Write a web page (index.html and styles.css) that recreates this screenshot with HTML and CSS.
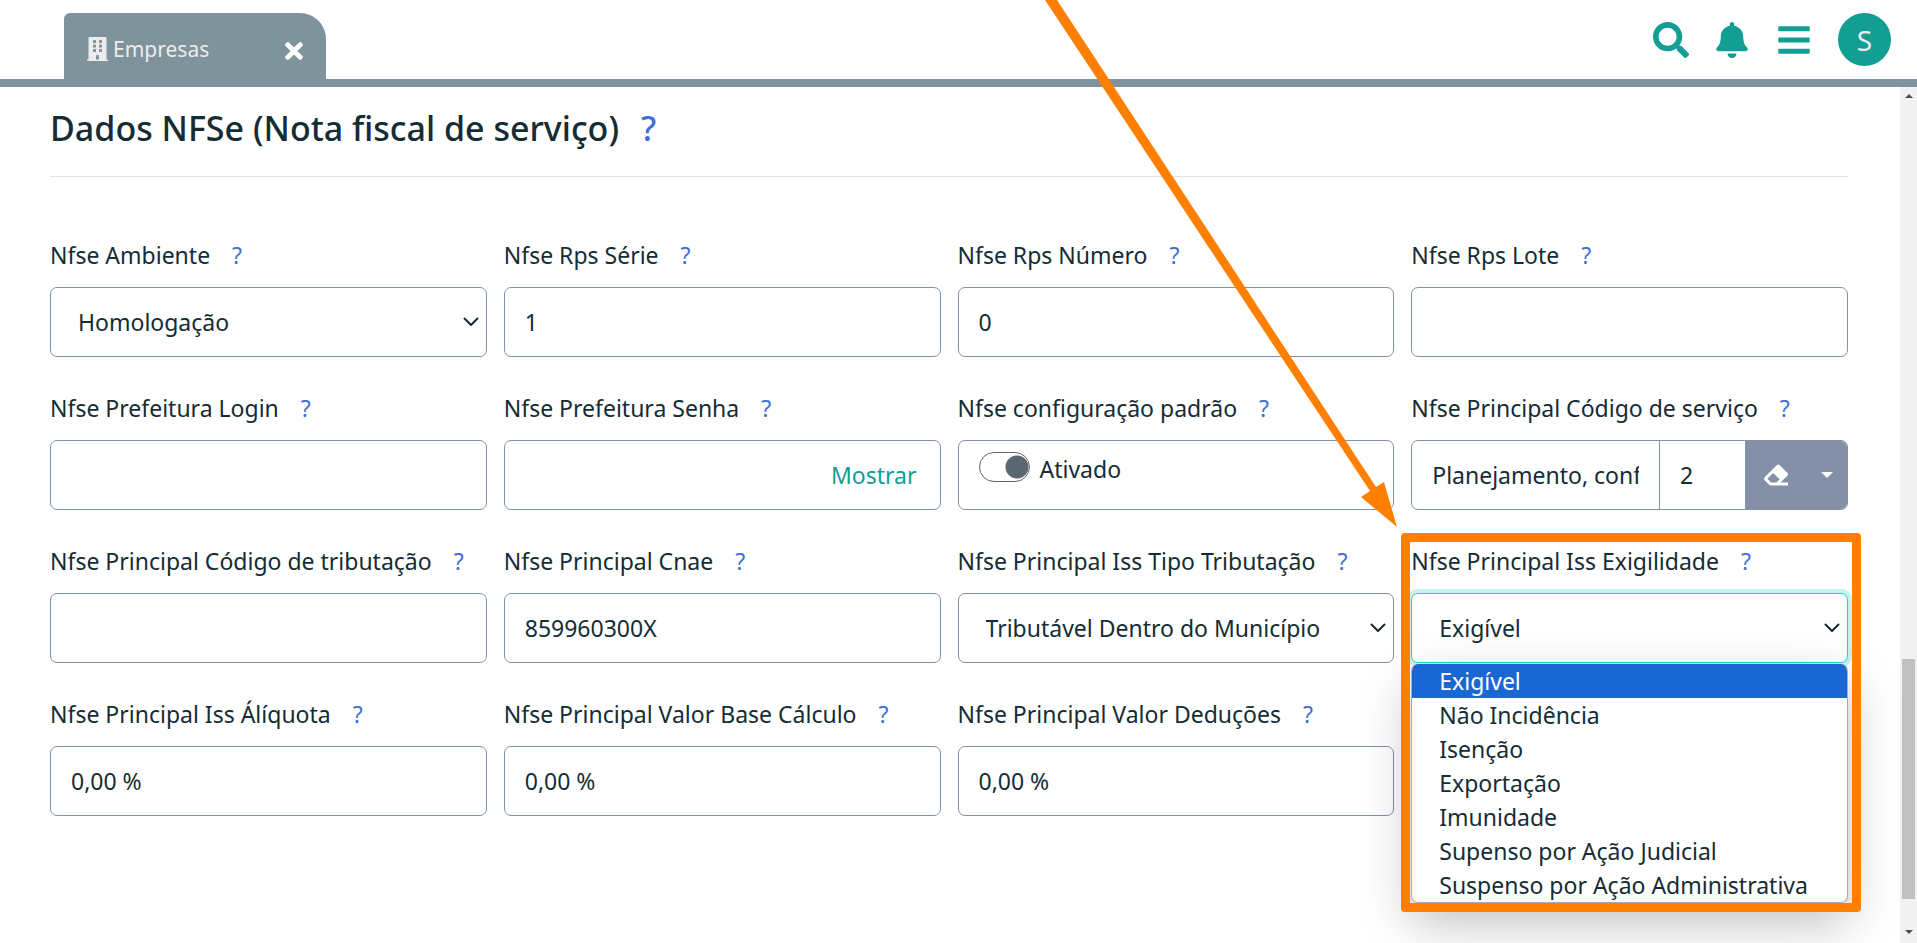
FILE: index.html
```html
<!DOCTYPE html>
<html lang="pt-BR">
<head>
<meta charset="utf-8">
<title>Empresas</title>
<link rel="stylesheet" href="styles.css">
</head>
<body>
<header class="topbar">
  <div class="tab">
    <svg class="tab-icon" viewBox="0 0 448 512" aria-hidden="true"><path d="M436 480h-20V24c0-13.300-10.700-24-24-24H56C42.700 0 32 10.700 32 24v456H12c-6.600 0-12 5.400-12 12v20h448v-20c0-6.600-5.400-12-12-12zM128 76c0-6.600 5.400-12 12-12h40c6.600 0 12 5.400 12 12v40c0 6.600-5.400 12-12 12h-40c-6.600 0-12-5.400-12-12V76zm0 96c0-6.600 5.400-12 12-12h40c6.600 0 12 5.400 12 12v40c0 6.600-5.400 12-12 12h-40c-6.600 0-12-5.400-12-12v-40zm52 148h-40c-6.600 0-12-5.400-12-12v-40c0-6.600 5.400-12 12-12h40c6.600 0 12 5.400 12 12v40c0 6.600-5.400 12-12 12zm76 160h-64v-84c0-6.600 5.400-12 12-12h40c6.600 0 12 5.400 12 12v84zm64-172c0 6.600-5.400 12-12 12h-40c-6.600 0-12-5.400-12-12v-40c0-6.600 5.400-12 12-12h40c6.600 0 12 5.400 12 12v40zm0-96c0 6.600-5.400 12-12 12h-40c-6.600 0-12-5.400-12-12v-40c0-6.600 5.400-12 12-12h40c6.600 0 12 5.400 12 12v40zm0-96c0 6.600-5.400 12-12 12h-40c-6.600 0-12-5.400-12-12V76c0-6.600 5.400-12 12-12h40c6.600 0 12 5.400 12 12v40z"/></svg>
    <span class="tab-title">Empresas</span>
    <button class="tab-close" type="button" aria-label="Fechar aba"><svg viewBox="0 0 352 512" aria-hidden="true"><path d="M242.720 256l100.070-100.070c12.280-12.280 12.280-32.190 0-44.480l-22.240-22.240c-12.280-12.280-32.190-12.280-44.480 0L176 189.280 75.930 89.210c-12.280-12.280-32.190-12.280-44.480 0L9.210 111.450c-12.280 12.280-12.280 32.190 0 44.480L109.280 256 9.210 356.070c-12.280 12.280-12.280 32.190 0 44.480l22.240 22.240c12.280 12.280 32.200 12.280 44.480 0L176 322.720l100.070 100.070c12.280 12.280 32.200 12.280 44.480 0l22.240-22.240c12.280-12.280 12.280-32.190 0-44.480L242.720 256z"/></svg></button>
  </div>
  <nav class="actions">
    <button type="button" aria-label="Buscar"><svg class="ico-search" viewBox="0 0 512 512" aria-hidden="true"><path d="M505 442.700L405.300 343c-4.500-4.500-10.600-7-17-7H372c27.600-35.300 44-79.700 44-128C416 93.100 322.900 0 208 0S0 93.100 0 208s93.100 208 208 208c48.300 0 92.700-16.400 128-44v16.300c0 6.400 2.500 12.500 7 17l99.700 99.700c9.400 9.400 24.600 9.400 33.900 0l28.300-28.300c9.400-9.400 9.400-24.600.1-34zM208 336c-70.700 0-128-57.200-128-128 0-70.700 57.200-128 128-128 70.700 0 128 57.200 128 128 0 70.700-57.200 128-128 128z"/></svg></button>
    <button type="button" aria-label="Notificações"><svg class="ico-bell" viewBox="0 0 448 512" aria-hidden="true"><path d="M224 512c35.320 0 63.970-28.650 63.970-64H160.030c0 35.350 28.650 64 63.970 64zm215.390-149.710c-19.320-20.760-55.470-51.990-55.470-154.290 0-77.700-54.480-139.900-127.940-155.160V32c0-17.670-14.320-32-31.980-32s-31.980 14.330-31.980 32v20.840C118.560 68.100 64.080 130.300 64.080 208c0 102.300-36.150 133.530-55.470 154.290-6 6.450-8.660 14.160-8.610 21.710.11 16.400 12.980 32 32.100 32h383.800c19.120 0 32-15.600 32.100-32 .05-7.550-2.610-15.270-8.610-21.710z"/></svg></button>
    <button type="button" aria-label="Menu"><svg class="ico-menu" viewBox="0 0 448 512" aria-hidden="true"><path d="M16 132h416c8.837 0 16-7.163 16-16V76c0-8.837-7.163-16-16-16H16C7.163 60 0 67.163 0 76v40c0 8.837 7.163 16 16 16zm0 160h416c8.837 0 16-7.163 16-16v-40c0-8.837-7.163-16-16-16H16c-8.837 0-16 7.163-16 16v40c0 8.837 7.163 16 16 16zm0 160h416c8.837 0 16-7.163 16-16v-40c0-8.837-7.163-16-16-16H16c-8.837 0-16 7.163-16 16v40c0 8.837 7.163 16 16 16z"/></svg></button>
    <button class="avatar" type="button" aria-label="Conta">S</button>
  </nav>
</header>
<div class="body">
  <main class="content">
    <h1 class="title">Dados NFSe (Nota fiscal de serviço)<a class="help" href="#">?</a></h1>
    <form class="grid">
      <div class="field">
        <div class="caption"><label for="amb">Nfse Ambiente</label><a class="help" href="#">?</a></div>
        <div class="select"><select class="control" id="amb"><option>Homologação</option></select><svg class="chevron" viewBox="0 0 16 10" aria-hidden="true"><path d="M1.500 1.500 8 8l6.500-6.500"/></svg></div>
      </div>
      <div class="field">
        <div class="caption"><label for="serie">Nfse Rps Série</label><a class="help" href="#">?</a></div>
        <input class="control" id="serie" type="text" value="1">
      </div>
      <div class="field">
        <div class="caption"><label for="num">Nfse Rps Número</label><a class="help" href="#">?</a></div>
        <input class="control" id="num" type="text" value="0">
      </div>
      <div class="field">
        <div class="caption"><label for="lote">Nfse Rps Lote</label><a class="help" href="#">?</a></div>
        <input class="control" id="lote" type="text">
      </div>
      <div class="field">
        <div class="caption"><label for="login">Nfse Prefeitura Login</label><a class="help" href="#">?</a></div>
        <input class="control" id="login" type="text">
      </div>
      <div class="field">
        <div class="caption"><label for="senha">Nfse Prefeitura Senha</label><a class="help" href="#">?</a></div>
        <div class="control group"><input class="bare" id="senha" type="password"><button class="reveal" type="button">Mostrar</button></div>
      </div>
      <div class="field">
        <div class="caption"><label for="padrao">Nfse configuração padrão</label><a class="help" href="#">?</a></div>
        <div class="control switch-box"><input class="switch" id="padrao" type="checkbox" role="switch" checked><label for="padrao">Ativado</label></div>
      </div>
      <div class="field">
        <div class="caption"><label for="servico">Nfse Principal Código de serviço</label><a class="help" href="#">?</a></div>
        <div class="control group">
          <input class="bare service" id="servico" type="text" value="Planejamento, confecção">
          <input class="bare code" type="text" value="2" aria-label="Código">
          <div class="tools">
            <button type="button" aria-label="Limpar"><svg class="ico-eraser" viewBox="0 0 512 512" aria-hidden="true"><path d="M497.941 273.941c18.745-18.745 18.745-49.137 0-67.882l-160-160c-18.745-18.745-49.136-18.746-67.883 0l-256 256c-18.745 18.745-18.745 49.137 0 67.882l96 96A48.004 48.004 0 0 0 144 480h356c6.627 0 12-5.373 12-12v-40c0-6.627-5.373-12-12-12H355.883l142.058-142.059zm-302.627-62.627l137.373 137.373L265.373 416H150.628l-80-80 124.686-124.686z"/></svg></button>
            <button type="button" aria-label="Opções"><svg class="ico-caret" viewBox="0 0 12 6" aria-hidden="true"><path d="M0 0h12L6 6z"/></svg></button>
          </div>
        </div>
      </div>
      <div class="field">
        <div class="caption"><label for="trib">Nfse Principal Código de tributação</label><a class="help" href="#">?</a></div>
        <input class="control" id="trib" type="text">
      </div>
      <div class="field">
        <div class="caption"><label for="cnae">Nfse Principal Cnae</label><a class="help" href="#">?</a></div>
        <input class="control" id="cnae" type="text" value="859960300X">
      </div>
      <div class="field">
        <div class="caption"><label for="tipo">Nfse Principal Iss Tipo Tributação</label><a class="help" href="#">?</a></div>
        <div class="select"><select class="control" id="tipo"><option>Tributável Dentro do Município</option></select><svg class="chevron" viewBox="0 0 16 10" aria-hidden="true"><path d="M1.500 1.500 8 8l6.500-6.500"/></svg></div>
      </div>
      <div class="field">
        <div class="caption"><label for="exig">Nfse Principal Iss Exigilidade</label><a class="help" href="#">?</a></div>
        <div class="select"><select class="control focused" id="exig"><option>Exigível</option></select><svg class="chevron" viewBox="0 0 16 10" aria-hidden="true"><path d="M1.500 1.500 8 8l6.500-6.500"/></svg></div>
        <ul class="options" role="listbox" aria-label="Nfse Principal Iss Exigilidade">
          <li role="option" aria-selected="true">Exigível</li>
          <li role="option">Não Incidência</li>
          <li role="option">Isenção</li>
          <li role="option">Exportação</li>
          <li role="option">Imunidade</li>
          <li role="option">Supenso por Ação Judicial</li>
          <li role="option">Suspenso por Ação Administrativa</li>
        </ul>
        <div class="highlight"></div>
      </div>
      <div class="field">
        <div class="caption"><label for="aliq">Nfse Principal Iss Álíquota</label><a class="help" href="#">?</a></div>
        <input class="control" id="aliq" type="text" value="0,00 %">
      </div>
      <div class="field">
        <div class="caption"><label for="base">Nfse Principal Valor Base Cálculo</label><a class="help" href="#">?</a></div>
        <input class="control" id="base" type="text" value="0,00 %">
      </div>
      <div class="field">
        <div class="caption"><label for="ded">Nfse Principal Valor Deduções</label><a class="help" href="#">?</a></div>
        <input class="control" id="ded" type="text" value="0,00 %">
      </div>
    </form>
  </main>
  <div class="scrollbar" aria-hidden="true">
    <svg class="sb-arrow" viewBox="0 0 8 4"><path d="M0 4h8L4 0z"/></svg>
    <div class="sb-track"><div class="sb-thumb"></div></div>
    <svg class="sb-arrow" viewBox="0 0 8 4"><path d="M0 0h8L4 4z"/></svg>
  </div>
</div>
<svg class="pointer" viewBox="0 0 352 527" aria-hidden="true"><path d="M0 0H12L331 487 339 482 352 527 316 497 325 491z"/></svg>
</body>
</html>
```
FILE: styles.css
```css
* { box-sizing: border-box; }
body {
  margin: 0;
  min-height: 100vh;
  display: flex;
  flex-direction: column;
  position: relative;
  overflow: hidden;
  background: #fff;
  color: #152c35;
  font-family: "Noto Sans", "Open Sans", sans-serif;
  font-size: 23px;
}
button, input, select { font: inherit; color: inherit; }
button { background: none; border: 0; padding: 0; cursor: pointer; }
a { text-decoration: none; }

.topbar {
  height: 87px;
  border-bottom: 8px solid #7f939d;
  padding: 13px 26px 0 64px;
  display: flex;
  justify-content: space-between;
}
.tab {
  width: 262px;
  padding: 5px 23px 0;
  display: flex;
  align-items: center;
  gap: 5px;
  background: #7f939d;
  border-radius: 6px 26px 0 0;
  color: #ececec;
  font-size: 21px;
}
.tab-icon { width: 21px; height: 24px; fill: #ececec; }
.tab-title { flex: 1; }
.tab-close { display: flex; padding-top: 4px; }
.tab-close svg { width: 18px; height: 26px; fill: #fff; }
.actions { display: flex; align-items: flex-start; }
.actions button { height: 53px; display: flex; align-items: center; justify-content: center; }
.actions svg { fill: #129e93; }
.ico-search { width: 36px; height: 36px; margin-right: 27px; }
.ico-bell { width: 32px; height: 36px; margin-right: 30px; }
.ico-menu { width: 32px; height: 36px; margin-right: 28px; }
.actions .avatar {
  width: 53px;
  border-radius: 50%;
  background: #129e93;
  color: #ececec;
  font-size: 28px;
}

.body { flex: 1; display: flex; }
.content { flex: 1; padding: 0 52px 0 50px; }
.title {
  margin: 0 0 56px;
  height: 90px;
  padding-top: 17px;
  border-bottom: 1px solid #e0e3e6;
  font-size: 34px;
  line-height: 48px;
  font-weight: 500;
}
.title .help { margin-left: 22px; }
.help { color: #3f6fd8; }
.grid {
  display: grid;
  grid-template-columns: repeat(4, minmax(0, 1fr));
  gap: 29px 17px;
}
.field { position: relative; }
.caption { height: 54px; padding-top: 5px; line-height: 34px; white-space: nowrap; }
.caption .help { margin-left: 22px; }
.control {
  display: block;
  width: 100%;
  height: 70px;
  padding: 0 20px;
  border: 1px solid #8490a8;
  border-radius: 7px;
  background: #fff;
  outline: 0;
}
.select { position: relative; }
.select .control { appearance: none; padding: 0 48px 0 27px; }
.chevron {
  position: absolute;
  right: 8px;
  top: 30px;
  width: 16px;
  height: 10px;
  fill: none;
  stroke: #152c35;
  stroke-width: 2;
  stroke-linecap: round;
  stroke-linejoin: round;
  pointer-events: none;
}
.control.focused { border-color: #22d3c5; box-shadow: 0 0 0 4px #c5f3ef; }
.group { display: flex; padding: 0; overflow: hidden; }
.bare { flex: 1; min-width: 0; border: 0; padding: 0 20px; background: none; outline: 0; }
.reveal { color: #129e93; padding: 0 23px; }
.code { flex: 0 0 86px; border-left: 1px solid #8490a8; }
.tools { flex: 0 0 102px; display: flex; background: #8490a8; }
.tools button { flex: 1; display: flex; align-items: center; justify-content: center; }
.tools button:first-child { flex: 0 0 62px; }
.tools svg { fill: #fff; }
.ico-eraser { width: 24px; height: 24px; }
.ico-caret { width: 12px; height: 6px; }
.switch-box { display: flex; align-items: flex-start; gap: 10px; padding-top: 11px; line-height: 34px; }
.switch {
  appearance: none;
  width: 51px;
  height: 30px;
  margin: 0;
  border: 1px solid #5b6770;
  border-radius: 15px;
  background: radial-gradient(circle at 37px 14px, #5b6770 11px, transparent 12px);
}
.options {
  position: absolute;
  z-index: 1;
  top: 125px;
  left: 0;
  right: 0;
  margin: 0;
  padding: 0;
  list-style: none;
  background: #fff;
  border: 1px solid #aaa;
  border-top: 0;
  border-radius: 7px;
  box-shadow: 0 20px 50px rgba(0, 0, 0, 0.25);
  overflow: hidden;
  line-height: 34px;
  white-space: nowrap;
}
.options li { padding-left: 27px; }
.options li[aria-selected="true"] { background: #1967d2; color: #fff; }
.highlight {
  position: absolute;
  z-index: 2;
  inset: -6px -13px -249px -10px;
  border: 9px solid #ff8000;
  border-radius: 4px;
  pointer-events: none;
}
.scrollbar {
  width: 17px;
  background: #f1f1f1;
  display: flex;
  flex-direction: column;
  align-items: center;
  padding: 7px 0 9px;
}
.sb-arrow { width: 8px; height: 4px; fill: #505050; }
.sb-track { flex: 1; width: 13px; display: flex; flex-direction: column; justify-content: flex-end; padding-bottom: 31px; }
.sb-thumb { height: 30%; background: #c1c1c1; }
.pointer {
  position: absolute;
  z-index: 3;
  top: 0;
  right: 520px;
  width: 352px;
  height: 527px;
  fill: #ff8000;
}
```
